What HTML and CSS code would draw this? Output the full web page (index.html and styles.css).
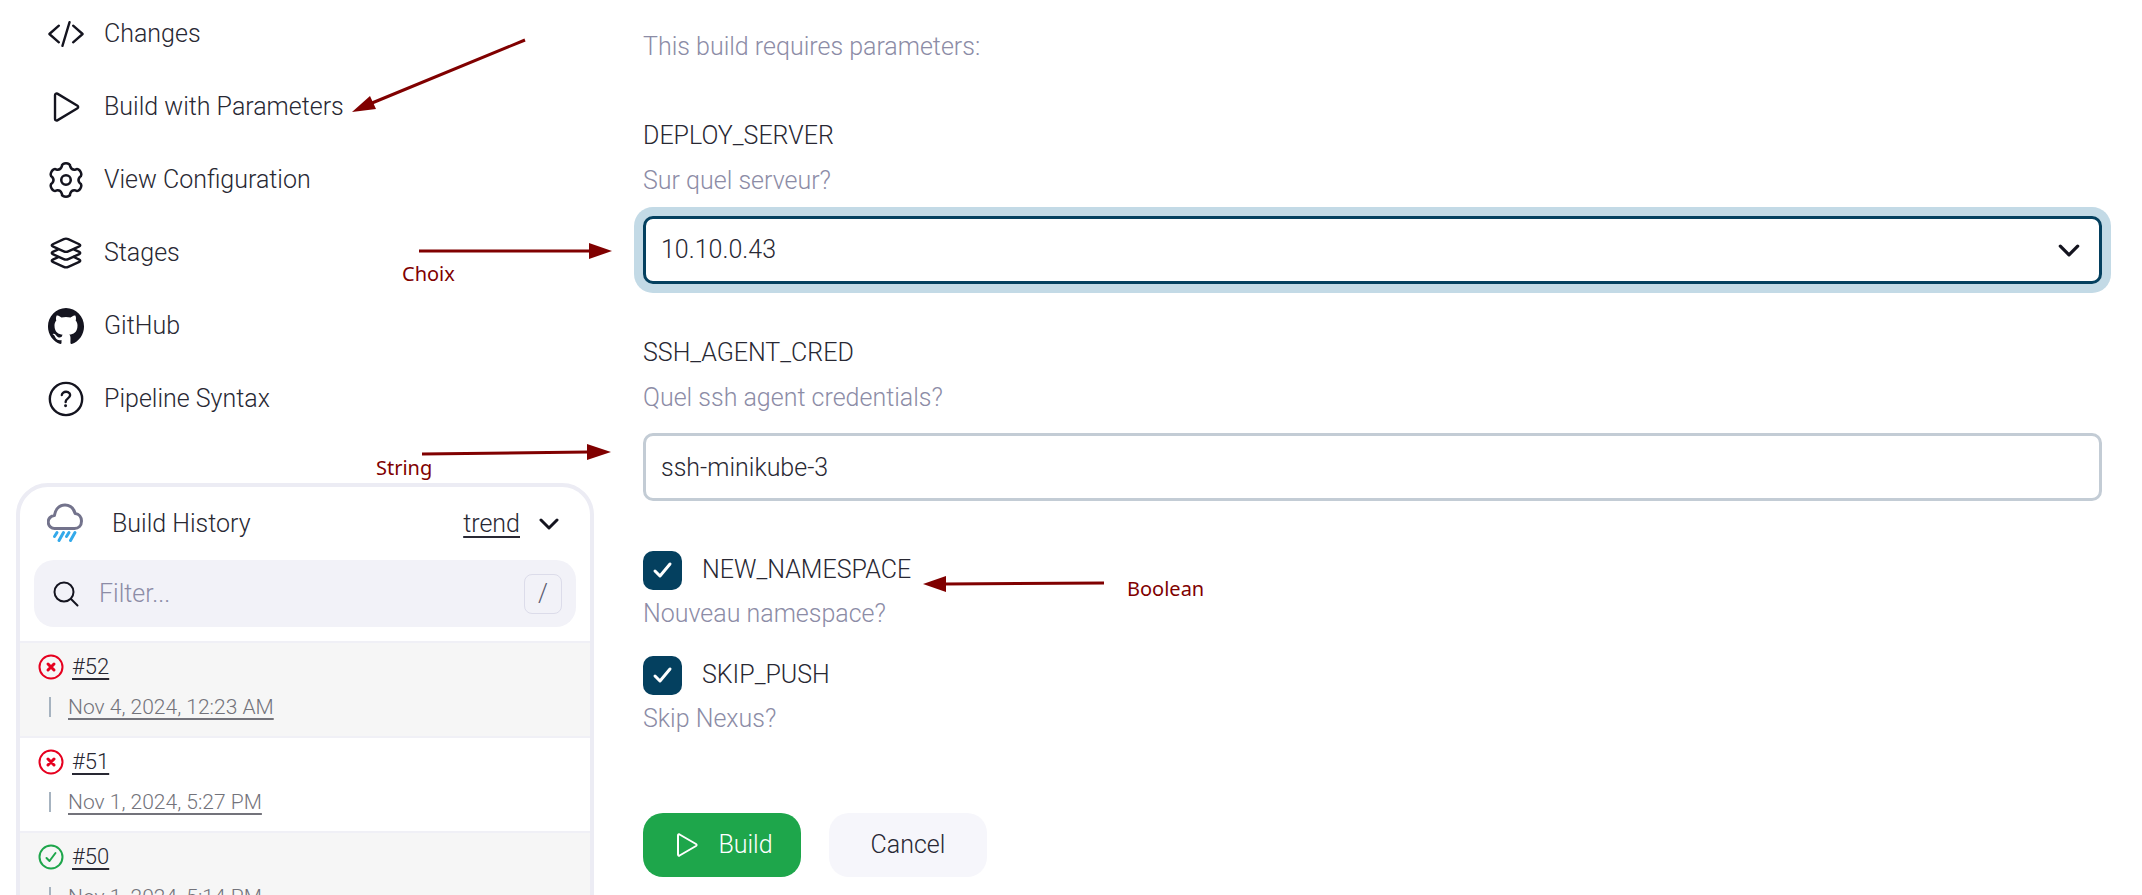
FILE: index.html
```html
<!DOCTYPE html>
<html lang="en">
<head>
<meta charset="utf-8">
<title>Build with Parameters</title>
<link rel="stylesheet" href="styles.css">
</head>
<body>
<div class="page">
  <aside class="sidebar">
    <nav class="tasks">
      <a class="task" href="#changes">
        <svg class="task-icon" viewBox="0 0 512 512"><path d="M160 368L32 256l128-112M352 368l128-112-128-112M304 96l-96 320"/></svg>
        Changes</a>
      <a class="task" href="#build">
        <svg class="task-icon" viewBox="0 0 512 512"><path d="M108 96v320c0 17 17 28 31 20l272-163c12-7 12-27 0-34L139 76c-14-8-31 3-31 20z"/></svg>
        Build with Parameters</a>
      <a class="task" href="#configuration">
        <svg class="task-icon" viewBox="0 0 24 24"><path class="thin" d="M9.370 3.390C9 .8 15 .8 14.630 3.390Q15.500 5.940 18.140 5.420C20.200 3.800 23.200 9 20.770 9.980Q19 12 20.770 14.020C23.200 15 20.200 20.200 18.140 18.580Q15.500 18.060 14.630 20.610C15 23.200 9 23.200 9.370 20.610Q8.500 18.060 5.860 18.580C3.800 20.200.8 15 3.230 14.020Q5 12 3.230 9.980C.8 9 3.800 3.800 5.860 5.420Q8.500 5.940 9.370 3.390Z"/><circle class="thin" cx="12" cy="12" r="3"/></svg>
        View Configuration</a>
      <a class="task" href="#stages">
        <svg class="task-icon" viewBox="0 0 512 512"><path d="M434.800 137.650l-149.360-68.100c-16.190-7.400-42.690-7.400-58.880 0L77.300 137.650c-17.600 8-17.600 21.090 0 29.090l148 67.500c16.890 7.700 44.690 7.700 61.580 0l148-67.500c17.520-8 17.520-21.100-.08-29.090zM160 308.520l-82.700 37.110c-17.600 8-17.600 21.100 0 29.100l148 67.500c16.890 7.690 44.690 7.690 61.580 0l148-67.500c17.600-8 17.600-21.100 0-29.100l-79.940-38.470M160 204.480l-82.800 37.160c-17.600 8-17.600 21.100 0 29.100l148 67.490c16.890 7.700 44.690 7.700 61.580 0l148-67.490c17.700-8 17.700-21.100.1-29.100L352 204.480"/></svg>
        Stages</a>
      <a class="task" href="#github">
        <svg class="task-icon solid" viewBox="20 20 472 472"><path d="M256 32C132.300 32 32 134.900 32 261.700c0 101.500 64.200 187.500 153.200 217.900a17.560 17.560 0 003.800.400c8.300 0 11.500-6.100 11.500-11.400 0-5.500-.2-19.900-.3-39.100a102.400 102.400 0 01-22.600 2.700c-43.100 0-52.900-33.500-52.900-33.500-10.200-26.500-24.900-33.600-24.900-33.600-19.500-13.700-.1-14.100 1.400-14.100h.1c22.500 2 34.300 23.800 34.300 23.800 11.200 19.600 26.200 25.100 39.600 25.100a63 63 0 0025.600-6c2-14.800 7.800-24.900 14.200-30.700-49.700-5.800-102-25.500-102-113.500 0-25.100 8.700-45.600 23-61.600-2.300-5.800-10-29.200 2.200-60.800a18.640 18.640 0 015-.5c8.100 0 26.400 3.100 56.600 24.100a208.210 208.210 0 01112.200 0c30.200-21 48.500-24.100 56.600-24.100a18.640 18.640 0 015 .5c12.200 31.600 4.500 55 2.200 60.800 14.300 16.100 23 36.600 23 61.600 0 88.200-52.400 107.600-102.300 113.300 8 7.100 15.200 21.100 15.200 42.500 0 30.700-.3 55.500-.3 63 0 5.400 3.100 11.500 11.400 11.500a19.350 19.350 0 004-.4C415.900 449.200 480 363.100 480 261.700 480 134.900 379.700 32 256 32z"/></svg>
        GitHub</a>
      <a class="task" href="#syntax">
        <svg class="task-icon" viewBox="0 0 512 512"><circle cx="256" cy="256" r="218"/><path d="M200 202.290s.840-17.500 19.570-32.570C230.680 160.770 244 158.180 256 158c10.930-.14 20.690 1.670 26.530 4.450 10 4.760 29.470 16.380 29.470 41.090 0 26-17 37.810-36.370 50.800S251 281.430 251 296"/><circle class="dot" cx="250" cy="348" r="20"/></svg>
        Pipeline Syntax</a>
    </nav>

    <section class="history">
      <header class="history-head">
        <svg class="weather" viewBox="0 0 36 42"><path class="cloud" d="M8 25.500a6.500 6.500 0 0 1-.6-13C8.500 6 12.500 2 18 2c5 0 8.700 3.200 10.200 8.500C32 11 34.500 14 34.500 18c0 4.600-3 7.500-7 7.500z"/><path class="rain" d="M10 29.500l-2.500 4M16.500 29.500l-4.500 8M22 29.500l-2.500 4M28 29.500l-4.500 8"/></svg>
        <h2 class="history-title">Build History</h2>
        <a class="trend" href="#trend">trend</a>
        <svg class="chevron" viewBox="0 0 20 12"><path d="M2 2l8 8 8-8"/></svg>
      </header>
      <label class="filter">
        <svg class="search" viewBox="0 0 26 26"><circle cx="11" cy="11" r="9.500"/><path d="M18 18l6.500 6.500"/></svg>
        <input class="filter-input" type="text" placeholder="Filter..." aria-label="Filter builds">
        <kbd class="key">/</kbd>
      </label>
      <ul class="builds">
        <li class="build">
          <div class="build-line"><svg class="status failed" viewBox="0 0 26 26"><circle cx="13" cy="13" r="11.500"/><path d="M10 10l6 6M16 10l-6 6"/></svg><a class="number" href="#52">#52</a></div>
          <div class="when"><a class="date" href="#52">Nov 4, 2024, 12:23 AM</a></div>
        </li>
        <li class="build">
          <div class="build-line"><svg class="status failed" viewBox="0 0 26 26"><circle cx="13" cy="13" r="11.500"/><path d="M10 10l6 6M16 10l-6 6"/></svg><a class="number" href="#51">#51</a></div>
          <div class="when"><a class="date" href="#51">Nov 1, 2024, 5:27 PM</a></div>
        </li>
        <li class="build">
          <div class="build-line"><svg class="status passed" viewBox="0 0 26 26"><circle cx="13" cy="13" r="11.500"/><path d="M8.500 14l3 3 6-8"/></svg><a class="number" href="#50">#50</a></div>
          <div class="when"><a class="date" href="#50">Nov 1, 2024, 5:14 PM</a></div>
        </li>
      </ul>
    </section>
  </aside>

  <main class="main">
    <form class="form">
      <p class="hint intro">This build requires parameters:</p>
      <div class="field">
        <label class="label" for="server">DEPLOY_SERVER</label>
        <p class="hint">Sur quel serveur?</p>
        <div class="select-wrap">
          <select class="control focused" id="server"><option>10.10.0.43</option></select>
          <svg class="chevron select-chevron" viewBox="0 0 20 12"><path d="M2 2l8 8 8-8"/></svg>
        </div>
      </div>
      <div class="field">
        <label class="label" for="cred">SSH_AGENT_CRED</label>
        <p class="hint">Quel ssh agent credentials?</p>
        <input class="control" id="cred" type="text" value="ssh-minikube-3">
      </div>
      <div class="option">
        <label class="check"><input class="box" type="checkbox" checked>NEW_NAMESPACE</label>
        <p class="hint">Nouveau namespace?</p>
      </div>
      <div class="option">
        <label class="check"><input class="box" type="checkbox" checked>SKIP_PUSH</label>
        <p class="hint">Skip Nexus?</p>
      </div>
      <div class="actions">
        <button class="button primary" type="button">
          <svg class="play" viewBox="0 0 22 26"><path d="M2 3.500v19c0 1 .8 1.400 1.600 1L20 14c.8-.5.8-1.500 0-2L3.600 2.500c-.8-.4-1.600 0-1.600 1z"/></svg>
          Build</button>
        <button class="button" type="button">Cancel</button>
      </div>
    </form>
  </main>

  <svg class="notes" width="1240" height="620" viewBox="0 0 1240 620">
    <path class="shaft" d="M525 40L372 103M419 251H590M422 454L588 452M1104 583L945 584"/>
    <path class="head" d="M352 112L370 96L376 109ZM612 251L589 243V259ZM611 452L587 444V460ZM923 584L946 576V592Z"/>
    <text x="402" y="281">Choix</text>
    <text x="376" y="475">String</text>
    <text x="1127" y="596">Boolean</text>
  </svg>
</div>
</body>
</html>
```
FILE: styles.css
```css
* { box-sizing: border-box; }
body {
  margin: 0;
  height: 100vh;
  overflow: hidden;
  background: #fff;
  color: #14141f;
  font: 300 25px/40px Roboto, "Liberation Sans", sans-serif;
}
h2, p, ul { margin: 0; padding: 0; font: inherit; list-style: none; }
a { color: inherit; }
svg { fill: none; stroke: currentColor; stroke-linecap: round; stroke-linejoin: round; flex: none; }
input, select, button, kbd { font: inherit; color: inherit; }

.page { position: relative; display: flex; gap: 49px; padding-right: 40px; }
.sidebar { width: 594px; padding-left: 16px; flex: none; }
.main { flex: 1; min-width: 0; }

.tasks { display: flex; flex-direction: column; gap: 33px; padding: 14px 0 64px 31px; }
.task { display: flex; align-items: center; gap: 19px; text-decoration: none; }
.task-icon { width: 38px; height: 38px; stroke-width: 32; }
.thin { stroke-width: 1.6; }
.solid, .dot { fill: currentColor; stroke: none; }

.history { border: 4px solid #ececf4; border-radius: 32px 32px 0 0; }
.history-head { display: flex; align-items: center; height: 73px; padding: 0 31px 0 27px; }
.weather { width: 36px; height: 42px; margin-right: 29px; }
.cloud { stroke: #73738c; stroke-width: 3; }
.rain { stroke: #33a9ea; stroke-width: 3; }
.history-title { flex: 1; }
.trend { text-decoration-thickness: 2px; text-underline-offset: 4px; margin-right: 19px; }
.chevron { width: 20px; height: 12px; stroke-width: 3; }
.filter { display: flex; align-items: center; height: 67px; margin: 0 14px 14px; padding: 0 14px 0 19px; border-radius: 20px; background: #f2f2f8; }
.search { width: 26px; height: 26px; stroke-width: 2; margin-right: 20px; }
.filter-input { flex: 1; min-width: 0; padding: 0; border: 0; background: none; outline: 0; }
.filter-input::placeholder { color: #8c8ca6; opacity: 1; }
.key { width: 38px; height: 40px; border: 1px solid #dcdcea; border-radius: 8px; line-height: 38px; text-align: center; color: #5c5c70; }
.build { height: 95px; padding: 9px 18px 0; border-top: 2px solid #f0f0f6; font-size: 22px; line-height: 30px; }
.build:nth-child(odd) { background: #f6f6f6; }
.build-line { display: flex; align-items: center; gap: 8px; height: 30px; }
.status { width: 26px; height: 26px; stroke-width: 2; }
.failed { color: #e6001f; }
.failed path { stroke-width: 3; }
.passed { color: #1ea64b; }
.number, .date { text-decoration-thickness: 2px; text-underline-offset: 4px; }
.when { display: flex; align-items: center; gap: 17px; height: 30px; margin-top: 10px; padding-left: 11px; font-size: 21px; color: #73737b; }
.when::before { content: ""; width: 2px; height: 20px; background: #a6b3c0; }

.form { display: flex; flex-direction: column; padding-top: 27px; }
.hint { color: #8c8ca6; }
.intro { margin-bottom: 49px; }
.field { margin-bottom: 49px; }
.label { display: block; margin-bottom: 5px; }
.field .hint { margin-bottom: 15px; }
.control { display: block; width: 100%; height: 68px; padding: 0 15px; border: 3px solid #c3ccd5; border-radius: 10px; background: #fff; appearance: none; outline: 0; }
.focused { border-color: #04405f; box-shadow: 0 0 0 9px #c3dae6; }
.select-wrap { position: relative; }
.select-chevron { position: absolute; right: 22px; top: 28px; width: 22px; height: 13px; pointer-events: none; }
.option { margin-bottom: 21px; }
.check { display: flex; align-items: center; gap: 20px; height: 40px; margin-bottom: 4px; }
.box { width: 39px; height: 39px; margin: 0; border-radius: 10px; appearance: none; background: #04405f url("data:image/svg+xml,%3Csvg xmlns='http://www.w3.org/2000/svg' viewBox='0 0 39 39' fill='none' stroke='white' stroke-width='3' stroke-linecap='round' stroke-linejoin='round'%3E%3Cpath d='M12 20l5 5 10-12'/%3E%3C/svg%3E"); }
.actions { display: flex; gap: 28px; margin-top: 53px; }
.button { display: flex; align-items: center; justify-content: center; gap: 20px; width: 158px; height: 64px; padding: 0; border: 0; border-radius: 20px; background: #f6f6fb; }
.primary { padding-left: 5px; background: #1ea64b; color: #fff; }
.play { width: 22px; height: 26px; stroke-width: 2; }
.task, .history-title, .trend, .number, .label, .control, .check, .button:not(.primary) { color: #282833; }
.task-icon { color: #14141f; }

.notes { position: absolute; left: 0; top: 0; pointer-events: none; }
.shaft { stroke: #800000; stroke-width: 3; stroke-linecap: butt; }
.head { fill: #800000; stroke: none; }
.notes text { fill: #800000; stroke: none; font: 400 20px "Noto Sans", sans-serif; }
```
